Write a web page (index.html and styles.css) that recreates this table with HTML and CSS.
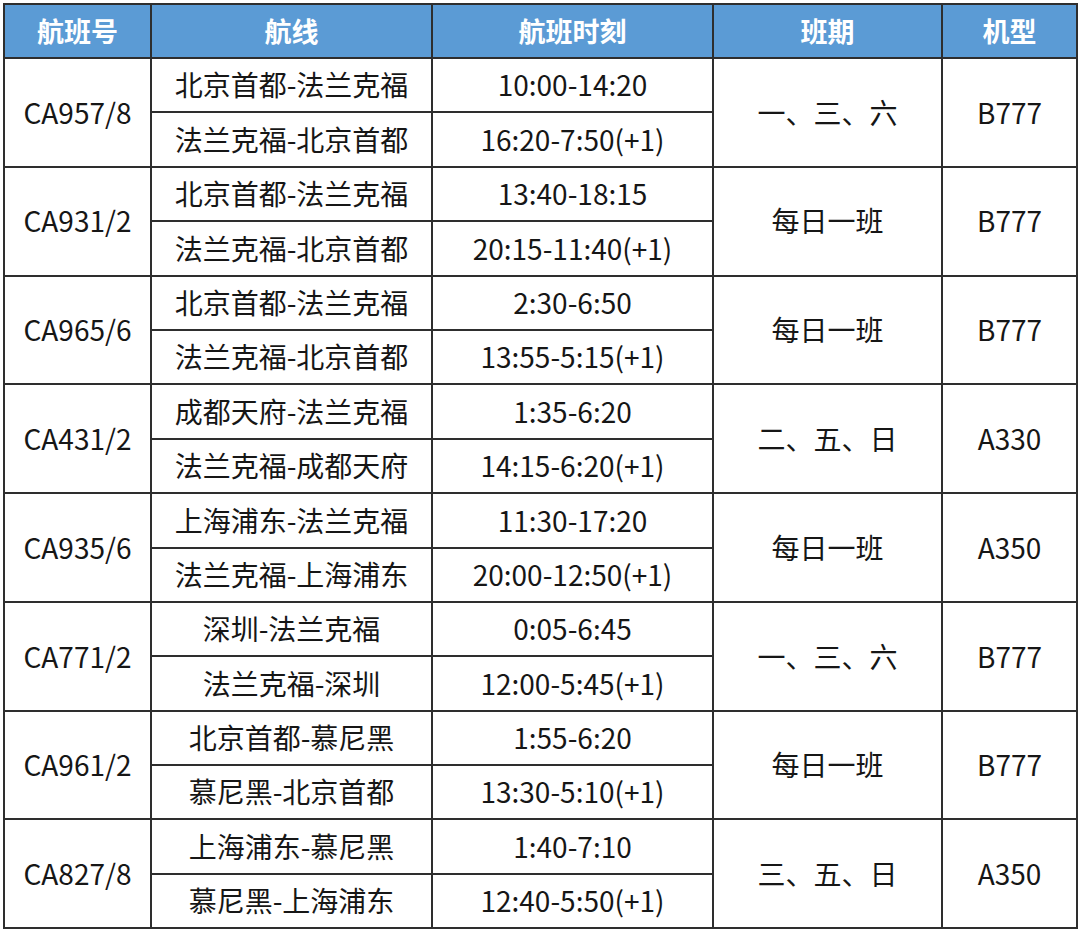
FILE: index.html
```html
<!DOCTYPE html>
<html lang="zh-CN">
<head>
<meta charset="utf-8">
<link rel="stylesheet" href="styles.css">
</head>
<body>
<table class="sched">
  <colgroup>
    <col class="c-no"><col class="c-route"><col class="c-time"><col class="c-days"><col class="c-type">
  </colgroup>
  <thead>
    <tr><th>航班号</th><th>航线</th><th>航班时刻</th><th>班期</th><th>机型</th></tr>
  </thead>
  <tbody>
    <tr><td rowspan="2">CA957/8</td><td>北京首都-法兰克福</td><td>10:00-14:20</td><td rowspan="2">一、三、六</td><td rowspan="2">B777</td></tr>
    <tr><td>法兰克福-北京首都</td><td>16:20-7:50(+1)</td></tr>
    <tr><td rowspan="2">CA931/2</td><td>北京首都-法兰克福</td><td>13:40-18:15</td><td rowspan="2">每日一班</td><td rowspan="2">B777</td></tr>
    <tr><td>法兰克福-北京首都</td><td>20:15-11:40(+1)</td></tr>
    <tr><td rowspan="2">CA965/6</td><td>北京首都-法兰克福</td><td>2:30-6:50</td><td rowspan="2">每日一班</td><td rowspan="2">B777</td></tr>
    <tr><td>法兰克福-北京首都</td><td>13:55-5:15(+1)</td></tr>
    <tr><td rowspan="2">CA431/2</td><td>成都天府-法兰克福</td><td>1:35-6:20</td><td rowspan="2">二、五、日</td><td rowspan="2">A330</td></tr>
    <tr><td>法兰克福-成都天府</td><td>14:15-6:20(+1)</td></tr>
    <tr><td rowspan="2">CA935/6</td><td>上海浦东-法兰克福</td><td>11:30-17:20</td><td rowspan="2">每日一班</td><td rowspan="2">A350</td></tr>
    <tr><td>法兰克福-上海浦东</td><td>20:00-12:50(+1)</td></tr>
    <tr><td rowspan="2">CA771/2</td><td>深圳-法兰克福</td><td>0:05-6:45</td><td rowspan="2">一、三、六</td><td rowspan="2">B777</td></tr>
    <tr><td>法兰克福-深圳</td><td>12:00-5:45(+1)</td></tr>
    <tr><td rowspan="2">CA961/2</td><td>北京首都-慕尼黑</td><td>1:55-6:20</td><td rowspan="2">每日一班</td><td rowspan="2">B777</td></tr>
    <tr><td>慕尼黑-北京首都</td><td>13:30-5:10(+1)</td></tr>
    <tr><td rowspan="2">CA827/8</td><td>上海浦东-慕尼黑</td><td>1:40-7:10</td><td rowspan="2">三、五、日</td><td rowspan="2">A350</td></tr>
    <tr><td>慕尼黑-上海浦东</td><td>12:40-5:50(+1)</td></tr>
  </tbody>
</table>
</body>
</html>
```
FILE: styles.css
```css
html, body {
  margin: 0;
  padding: 0;
  background: #ffffff;
}
body {
  padding: 3px 0 0 3px;
  font-family: "Noto Sans CJK SC", "Noto Sans", sans-serif;
  color: #161616;
}
.sched {
  border-collapse: collapse;
  table-layout: fixed;
  width: 1073px;
  border: 2px solid #2e2e2e;
}
.c-no { width: 147px; }
.c-route { width: 281px; }
.c-time { width: 281px; }
.c-days { width: 229px; }
.c-type { width: 135px; }
.sched th,
.sched td {
  border: 2px solid #2e2e2e;
  padding: 0;
  text-align: center;
  vertical-align: middle;
  line-height: 1.2;
  white-space: nowrap;
}
.sched th {
  background: #5b9bd5;
  color: #ffffff;
  font-weight: 700;
  font-size: 27px;
  height: 52px;
}
.sched tbody tr {
  height: 54.4px;
}
.sched td {
  font-weight: 400;
  font-size: 28px;
}
```
